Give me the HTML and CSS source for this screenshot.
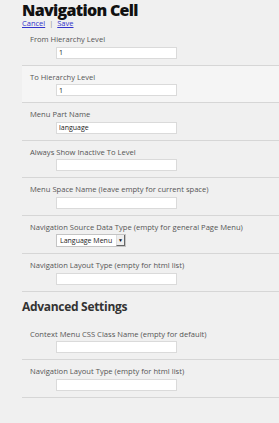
FILE: index.html
```html
<!DOCTYPE html>
<html lang="en">
<head>
    <meta charset="UTF-8">
    <title>Navigation Cell</title>
    <link rel="stylesheet" href="styles.css">
</head>
<body>
    <div class="page">
        <h1>Navigation Cell</h1>
        <div class="actions"><a href="#">Cancel</a> <span class="sep">|</span> <a href="#">Save</a></div>

        <div class="fields">
            <div class="field">
                <label>From Hierarchy Level</label>
                <input type="text" value="1">
            </div>
            <div class="field active">
                <label>To Hierarchy Level</label>
                <input type="text" value="1">
            </div>
            <div class="field">
                <label>Menu Part Name</label>
                <input type="text" value="language">
            </div>
            <div class="field">
                <label>Always Show Inactive To Level</label>
                <input type="text">
            </div>
            <div class="field">
                <label>Menu Space Name (leave empty for current space)</label>
                <input type="text">
            </div>
            <div class="field">
                <label>Navigation Source Data Type (empty for general Page Menu)</label>
                <div class="select-box">
                    <select>
                        <option>Language Menu</option>
                    </select>
                    <span class="arrow">&#9660;</span>
                </div>
            </div>
            <div class="field">
                <label>Navigation Layout Type (empty for html list)</label>
                <input type="text">
            </div>
        </div>

        <h2>Advanced Settings</h2>

        <div class="fields">
            <div class="field">
                <label>Context Menu CSS Class Name (empty for default)</label>
                <input type="text">
            </div>
            <div class="field">
                <label>Navigation Layout Type (empty for html list)</label>
                <input type="text">
            </div>
        </div>
    </div>
</body>
</html>
```

FILE: styles.css
```css
body {
    margin: 0;
    background: #f0f0f0;
    font-family: "Open Sans", sans-serif;
    color: #555;
}
.page {
    padding-left: 22px;
    padding-top: 2px;
}
h1 {
    margin: 0;
    font-size: 16px;
    line-height: 16px;
    font-weight: 800;
    letter-spacing: -0.7px;
    color: #111;
}
.actions {
    margin-top: 1px;
    font-size: 7.5px;
    line-height: 9px;
    color: #888;
}
.actions a {
    color: #3333cc;
}
.actions .sep {
    margin: 0 2px;
}
.field {
    padding: 6px 0 6px 8px;
    border-bottom: 1px solid #d6d6d6;
}
.field.active {
    background: #f5f5f5;
}
.field label {
    display: block;
    font-size: 7.6px;
    line-height: 11.5px;
    margin-bottom: 1px;
}
.field input {
    display: block;
    box-sizing: border-box;
    margin-left: 26px;
    width: 121px;
    height: 12px;
    border: 1px solid #dadada;
    background: #fff;
    padding: 0 2px;
    font-family: "Open Sans", sans-serif;
    font-size: 7px;
    color: #222;
    outline: none;
}
.select-box {
    display: flex;
    width: fit-content;
    margin-left: 26px;
    height: 13px;
    background: #fff;
    border: 1px solid #c4c4c4;
    box-sizing: border-box;
}
.select-box select {
    appearance: none;
    border: none;
    background: #fff;
    font-family: "Open Sans", sans-serif;
    font-size: 7px;
    color: #222;
    padding: 0 3px;
    height: 11px;
    line-height: 11px;
    width: 59px;
    outline: none;
}
.select-box .arrow {
    width: 9px;
    height: 11px;
    box-sizing: border-box;
    background: #eee;
    border-left: 1px solid #ddd;
    border-right: 1px solid #666;
    border-bottom: 1px solid #666;
    font-size: 5px;
    line-height: 10px;
    text-align: center;
    color: #111;
}
h2 {
    margin: 0;
    padding: 7px 0 8px;
    font-size: 12px;
    line-height: 16px;
    font-weight: 700;
    letter-spacing: -0.3px;
    color: #333;
}
```
